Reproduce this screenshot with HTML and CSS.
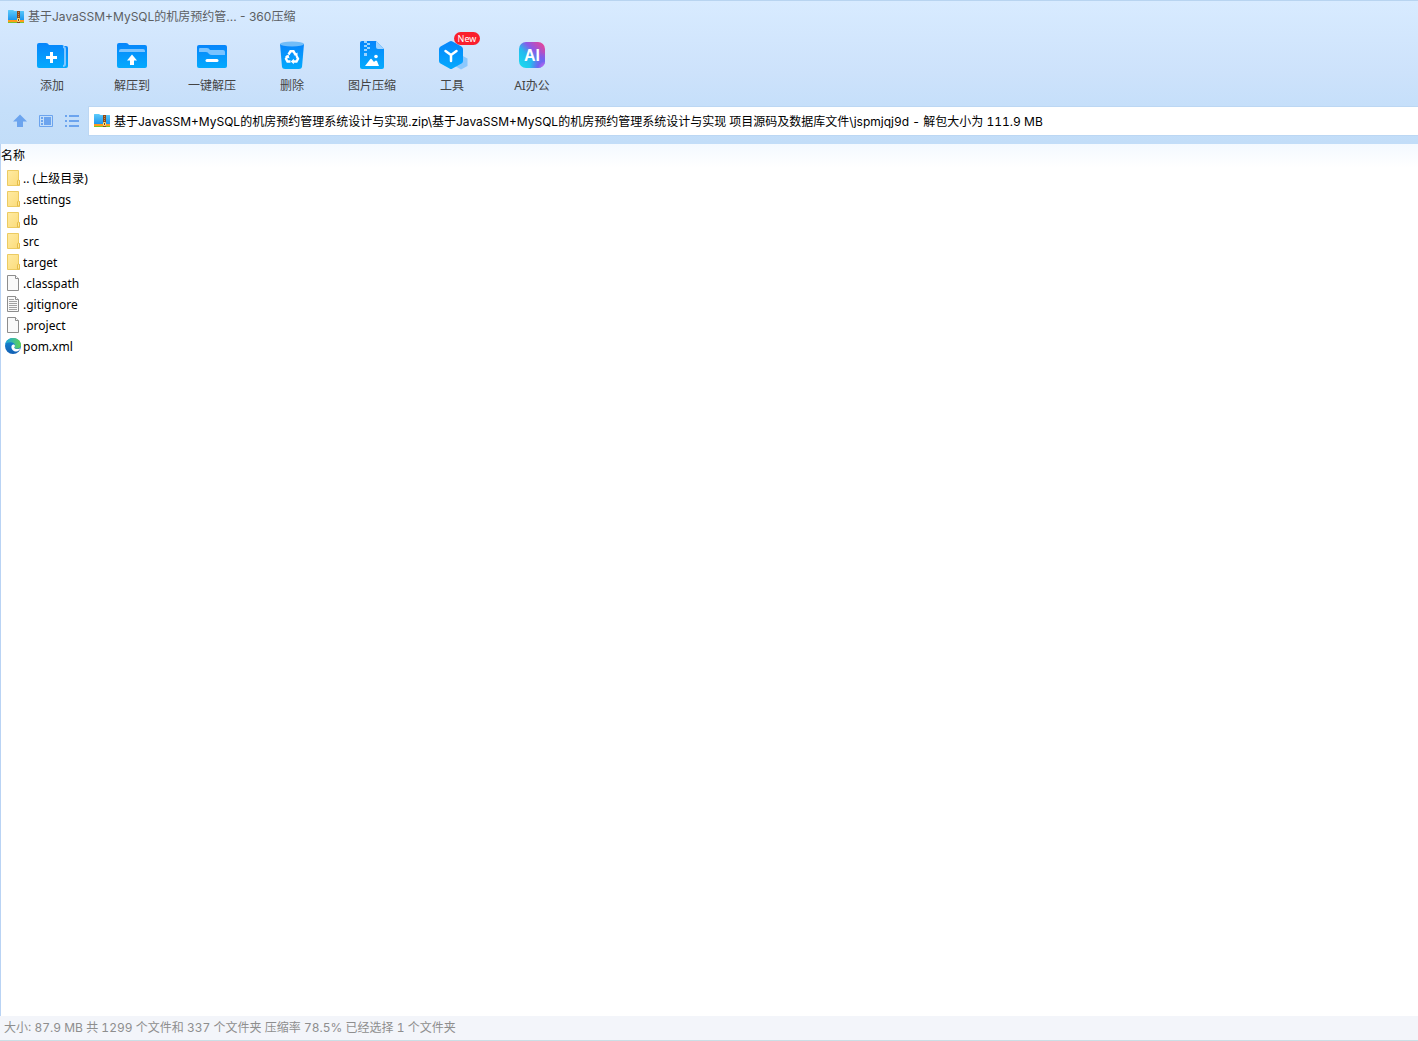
FILE: index.html
```html
<!DOCTYPE html>
<html lang="zh-CN">
<head>
<meta charset="UTF-8">
<title>360压缩</title>
<link rel="stylesheet" href="styles.css">
</head>
<body>
<svg class="defs" aria-hidden="true">
    <defs>
        <linearGradient id="blue" x1="0" y1="0" x2="0" y2="1">
            <stop offset="0" stop-color="#0785fb"/>
            <stop offset="1" stop-color="#04aafd"/>
        </linearGradient>
        <linearGradient id="folder" x1="0" y1="0" x2="1" y2="1">
            <stop offset="0" stop-color="#ffeba3"/>
            <stop offset="1" stop-color="#fbdb79"/>
        </linearGradient>
        <linearGradient id="zip-blue" x1="0" y1="0" x2="0" y2="1">
            <stop offset="0" stop-color="#5dcbfb"/>
            <stop offset="1" stop-color="#1d96ed"/>
        </linearGradient>
        <linearGradient id="edge-a" x1="0" y1="0" x2="1" y2="0">
            <stop offset="0" stop-color="#1ba8e0"/>
            <stop offset="1" stop-color="#62d353"/>
        </linearGradient>
        <linearGradient id="edge-b" x1="0" y1="0" x2="0" y2="1">
            <stop offset="0" stop-color="#1689d5"/>
            <stop offset="1" stop-color="#1260b4"/>
        </linearGradient>
        <linearGradient id="ai-base" x1="0" y1="1" x2="1" y2="0">
            <stop offset="0" stop-color="#18e0ee"/>
            <stop offset=".4" stop-color="#25b9ee"/>
            <stop offset=".62" stop-color="#8a5ae8"/>
            <stop offset="1" stop-color="#fb3f86"/>
        </linearGradient>
        <radialGradient id="ai-glow" cx="1" cy="1" r=".6">
            <stop offset="0" stop-color="#ef63ee"/>
            <stop offset=".45" stop-color="#6f65f0"/>
            <stop offset="1" stop-color="#6f65f0" stop-opacity="0"/>
        </radialGradient>
    </defs>
    <symbol id="i-zip" viewBox="0 0 16 16">
        <path d="M0 1.500Q0 1 .5 1H5l1.500 1H15.500q.5 0 .5.500V11H0z" fill="url(#zip-blue)"/>
        <path d="M0 11h16v2H0z" fill="#ff9a1c"/>
        <path d="M0 13h16v1H0z" fill="#79c52b"/>
        <path d="M9 2h3v12H9z" fill="#8a4a1c"/>
        <path d="M10 3h1v1h-1zM10 5h1v1h-1zM10 7h1v1h-1z" fill="#c98a4a"/>
        <path d="M9.500 9.500h2v3h-2z" fill="#7a3c14" stroke="#ffe27a"/>
    </symbol>
    <symbol id="i-folder" viewBox="0 0 16 16">
        <path d="M2.500.5h11v9l1 1v5h-12z" fill="url(#folder)" stroke="#eccb62"/>
        <path d="M12.500 15v-4l1-1.500 1 1.500v4z" fill="#ffe799" stroke="#e5bd49"/>
    </symbol>
    <symbol id="i-file" viewBox="0 0 16 16">
        <path d="M2.500.5h8l3 3v12h-11z" fill="#f9f9f9" stroke="#8d8d8d"/>
        <path d="M10.500.5v3h3" fill="#fff" stroke="#8d8d8d"/>
    </symbol>
    <symbol id="i-text" viewBox="0 0 16 16">
        <path d="M2.500.5h8l3 3v12h-11z" fill="#f9f9f9" stroke="#8d8d8d"/>
        <path d="M10.500.5v3h3" fill="#fff" stroke="#8d8d8d"/>
        <path d="M4 3.500h5M4 5.500h8M4 7.500h8M4 9.500h8M4 11.500h8M4 13.500h8" stroke="#a2a2a2"/>
    </symbol>
    <symbol id="i-edge" viewBox="0 0 16 16">
        <circle cx="8" cy="8" r="8" fill="url(#edge-b)"/>
        <path d="M.2 6.500C1 2.500 4.200 0 8 0c4.500 0 8 3 8 6.800 0 2.500-2 4-4.200 4-1.600 0-2.600-.6-2.600-1.200 0-.5.800-.8.800-2C10 5.800 8 4.200 5.500 4.200 3 4.200 1 5 .2 6.500z" fill="url(#edge-a)"/>
        <path d="M9.200 9.600c0 .8 1.200 1.500 3 1.500 1.400 0 2.500-.5 3.300-1.100-.8 2.300-2.300 3.400-4.200 3.400-2.700 0-4.900-2-4.900-4.500 0-1.200.8-2.400 1.900-2.400 1 0 1.700.6 1.700 1.500 0 .8-.8 1-.8 1.600z" fill="#fff"/>
    </symbol>
</svg>

<div class="window">
    <header class="title-bar">
        <svg class="icon"><use href="#i-zip"/></svg>
        <span>基于JavaSSM+MySQL的机房预约管... - 360压缩</span>
    </header>

    <div class="toolbar">
        <button type="button" class="tool">
            <svg class="tool-icon" viewBox="0 0 40 40">
                <path d="M5 10q0-2 2-2h7q2 0 3 2h13q2 0 2 2v21H7q-2 0-2-2z" fill="url(#blue)"/>
                <path d="M32 11h2q2 0 2 2v18q0 2-2 2h-4z" fill="url(#blue)"/>
                <path d="M31 12q2 0 2 2v15q0 2-2 2" fill="none" stroke="#81c7ff" stroke-width="2"/>
                <path d="M19.500 17v11M14 22.500h11" stroke="#fff" stroke-width="3"/>
            </svg>
            <span>添加</span>
        </button>
        <button type="button" class="tool">
            <svg class="tool-icon" viewBox="0 0 40 40">
                <path d="M5 10q0-2 2-2h7q2 0 3 2h16q2 0 2 2v19q0 2-2 2H7q-2 0-2-2z" fill="url(#blue)"/>
                <path d="M7 17v-1q0-2 2-2h22q2 0 2 2v1z" fill="#7dc4ff"/>
                <path d="M20 19.500l5 6h-3v4.500h-4v-4.500h-3z" fill="#fff"/>
            </svg>
            <span>解压到</span>
        </button>
        <button type="button" class="tool">
            <svg class="tool-icon" viewBox="0 0 40 40">
                <rect x="5" y="10" width="30" height="23" rx="2" fill="url(#blue)"/>
                <path d="M7 14q0-1 1-1h7q2 0 3 2h13q2 0 2 2v3H20q-2 0-3-1-1-2-3-2H7z" fill="#79c3ff"/>
                <path d="M15 25.500h10" stroke="#fff" stroke-width="3" stroke-linecap="round"/>
            </svg>
            <span>一键解压</span>
        </button>
        <button type="button" class="tool">
            <svg class="tool-icon" viewBox="0 0 40 40">
                <path d="M8 9h24l-2 23q-.3 2-3 2H13q-2.700 0-3-2z" fill="url(#blue)"/>
                <ellipse cx="20" cy="9" rx="12" ry="2.500" fill="#72bdf8"/>
                <g fill="none" stroke="#fff" stroke-width="2.400">
                    <path d="M16.500 19.500l2-3.200h3l1.800 3"/>
                    <path d="M24.500 21l1.500 2.700-1.500 2.800h-3.500"/>
                    <path d="M18.500 26.500h-3L14 23.700l1.500-2.700"/>
                </g>
                <path d="M25.500 17.500v4l-4-1.500zM21.800 23.800v5.400l-3-2.700zM13 21.500l3.500-2 1 4z" fill="#fff"/>
            </svg>
            <span>删除</span>
        </button>
        <button type="button" class="tool">
            <svg class="tool-icon" viewBox="0 0 40 40">
                <path d="M8 8q0-2 2-2h14l8 8v18q0 2-2 2H10q-2 0-2-2z" fill="url(#blue)"/>
                <path d="M24 6l8 8h-6q-2 0-2-2z" fill="#a1d3ff"/>
                <path d="M12 6h3v2h-3zM15 8h3v2h-3zM12 10h3v2h-3zM15 12h3v2h-3zM12 14h3v2h-3zM12 18h3v3h-3z" fill="#9bd3ff"/>
                <path d="M13 31l5-6.500q1-1.500 2 0l2 2.500 1-1q1-1 2 0l2 5z" fill="#fff"/>
                <circle cx="24" cy="21.500" r="1.800" fill="#fff"/>
            </svg>
            <span>图片压缩</span>
        </button>
        <button type="button" class="tool">
            <svg class="tool-icon" viewBox="0 0 40 40">
                <path d="M29 20l6.500 3.500v7.500L29 34.500 23 31v-7.500z" fill="#8cc8fd"/>
                <path d="M17.500 6.500q1.500-1 3 0l9 5q1.500 1 1.500 2.500v12q0 1.500-1.500 2.500l-9 5q-1.500 1-3 0l-9-5Q7 27.500 7 26V14q0-1.500 1.500-2.500z" fill="url(#blue)"/>
                <path d="M13.500 16l5.500 4 5.500-4M19 20v6" fill="none" stroke="#fff" stroke-width="2.500" stroke-linecap="round"/>
            </svg>
            <span>工具</span>
            <span class="badge">New</span>
        </button>
        <button type="button" class="tool">
            <svg class="tool-icon" viewBox="0 0 40 40">
                <rect x="7" y="7" width="26" height="26" rx="7" fill="url(#ai-base)"/>
                <rect x="7" y="7" width="26" height="26" rx="7" fill="url(#ai-glow)"/>
                <text x="20" y="26" text-anchor="middle" class="ai-text">AI</text>
            </svg>
            <span>AI办公</span>
        </button>
    </div>

    <div class="nav-bar">
        <button type="button" class="nav-btn" aria-label="向上">
            <svg class="icon" viewBox="0 0 16 16"><path d="M8 1.500l7 7h-4V14H5V8.500H1z" fill="#6ca4ee"/></svg>
        </button>
        <button type="button" class="nav-btn" aria-label="预览">
            <svg class="icon" viewBox="0 0 16 16">
                <path d="M1.500 2.500h13v11h-13z" fill="none" stroke="#6ca4ee"/>
                <path d="M6 4h7v8H6zM3 4h2v2H3zM3 7h2v2H3zM3 10h2v2H3z" fill="#6ca4ee"/>
            </svg>
        </button>
        <button type="button" class="nav-btn" aria-label="列表">
            <svg class="icon" viewBox="0 0 16 16"><path d="M1 2h2v2H1zM5 2h10v2H5zM1 7h2v2H1zM5 7h10v2H5zM1 12h2v2H1zM5 12h10v2H5z" fill="#6ca4ee"/></svg>
        </button>
        <label class="address">
            <svg class="icon"><use href="#i-zip"/></svg>
            <input type="text" aria-label="路径" value="基于JavaSSM+MySQL的机房预约管理系统设计与实现.zip\基于JavaSSM+MySQL的机房预约管理系统设计与实现 项目源码及数据库文件\jspmjqj9d - 解包大小为 111.9 MB">
        </label>
    </div>

    <main class="file-panel">
        <table class="file-list">
            <thead>
                <tr><th>名称</th></tr>
            </thead>
            <tbody>
                <tr><td><div class="file"><svg class="icon"><use href="#i-folder"/></svg>.. (上级目录)</div></td></tr>
                <tr><td><div class="file"><svg class="icon"><use href="#i-folder"/></svg>.settings</div></td></tr>
                <tr><td><div class="file"><svg class="icon"><use href="#i-folder"/></svg>db</div></td></tr>
                <tr><td><div class="file"><svg class="icon"><use href="#i-folder"/></svg>src</div></td></tr>
                <tr><td><div class="file"><svg class="icon"><use href="#i-folder"/></svg>target</div></td></tr>
                <tr><td><div class="file"><svg class="icon"><use href="#i-file"/></svg>.classpath</div></td></tr>
                <tr><td><div class="file"><svg class="icon"><use href="#i-text"/></svg>.gitignore</div></td></tr>
                <tr><td><div class="file"><svg class="icon"><use href="#i-file"/></svg>.project</div></td></tr>
                <tr><td><div class="file"><svg class="icon"><use href="#i-edge"/></svg>pom.xml</div></td></tr>
            </tbody>
        </table>
    </main>

    <footer class="status-bar">大小: 87.9 MB 共 1299 个文件和 337 个文件夹 压缩率 78.5% 已经选择 1 个文件夹</footer>
</div>
</body>
</html>
```
FILE: styles.css
```css
*{
    box-sizing: border-box;
}
body{
    margin: 0;
    font: 12px/20px "Noto Sans", "Noto Sans CJK SC", sans-serif;
    color: #000;
    background: #fff;
}
button,input{
    margin: 0;
    padding: 0;
    border: none;
    background: none;
    font: inherit;
    color: inherit;
}
.defs{
    position: absolute;
    width: 0;
    height: 0;
}
.icon{
    flex: none;
    display: block;
    width: 16px;
    height: 16px;
}
.window{
    display: flex;
    flex-direction: column;
    min-height: 100vh;
    border-top: 1px solid #b8d4f0;
    background: linear-gradient(#d8ebff, #cde2fb 72px, #c5dffa 108px, #c2ddf8 143px);
}
.title-bar,.address,.status-bar{
    font-family: Inter, "Noto Sans CJK SC", sans-serif;
}

.title-bar{
    display: flex;
    align-items: center;
    gap: 4px;
    height: 32px;
    padding-left: 8px;
    color: #5c5f63;
}

.toolbar{
    display: flex;
    height: 74px;
    padding: 2px 0 0 12px;
}
.tool{
    position: relative;
    display: flex;
    flex-direction: column;
    align-items: center;
    gap: 1px;
    width: 80px;
    height: 64px;
    color: #444;
}
.tool-icon{
    width: 40px;
    height: 40px;
}
.ai-text{
    font: bold 16px "Liberation Sans", sans-serif;
    fill: #fff;
}
.badge{
    position: absolute;
    top: -3px;
    left: 42px;
    width: 26px;
    height: 13px;
    border-radius: 7px;
    background: #fa1f2d;
    color: #fff;
    font-size: 9px;
    line-height: 13px;
    text-align: center;
}

.nav-bar{
    display: flex;
    align-items: center;
    gap: 10px;
    height: 37px;
    padding: 0 0 9px 12px;
}
.nav-btn{
    width: 16px;
    height: 16px;
}
.address{
    flex: 1;
    display: flex;
    align-items: center;
    gap: 4px;
    height: 28px;
    margin-left: -1px;
    padding-left: 5px;
    background: #fff;
    box-shadow: 0 0 0 1px #bcd7f3;
    font-variant-numeric: tabular-nums;
}
.address input{
    flex: 1;
    padding-top: 2px;
    outline: none;
    font-variant-numeric: inherit;
}

.file-panel{
    flex: 1;
    border-left: 1px solid #b9d3f4;
    background: linear-gradient(#f3f9ff, #fff 24px);
}
.file-list{
    width: 100%;
    border-collapse: collapse;
}
.file-list th{
    height: 24px;
    padding: 0;
    font-weight: normal;
    text-align: left;
}
.file-list td{
    padding: 0;
}
.file{
    display: flex;
    align-items: center;
    gap: 2px;
    height: 21px;
    padding: 0 4px;
}
.file .icon{
    margin-bottom: 1px;
}

.status-bar{
    height: 25px;
    padding: 2px 4px;
    border-bottom: 1px solid #cadfe6;
    background: #f3f5fa;
    color: #8e8e8e;
    font-variant-numeric: tabular-nums;
}
```
